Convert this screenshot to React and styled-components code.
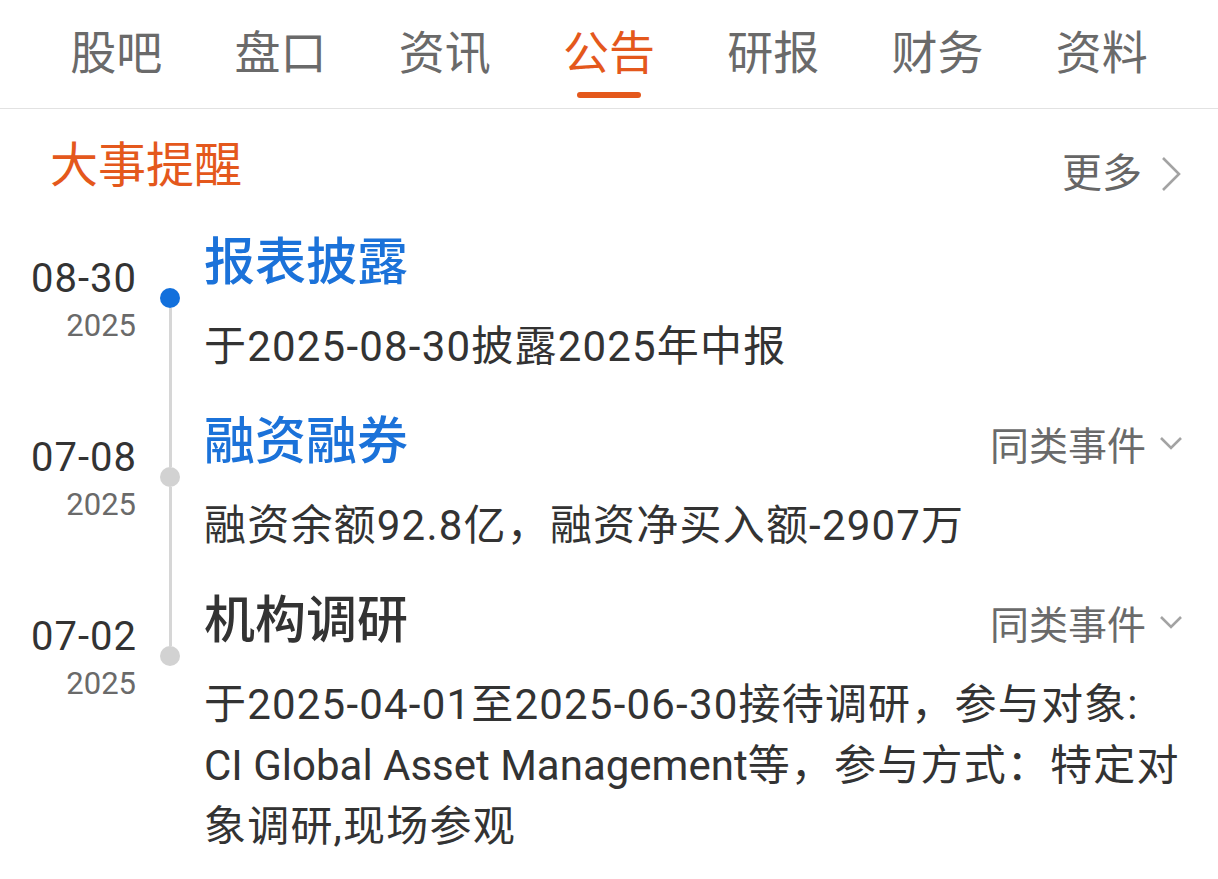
import React from "react";
import styled, { createGlobalStyle } from "styled-components";

const GlobalStyle = createGlobalStyle`
  html, body {
    margin: 0;
    padding: 0;
    background: #fff;
  }
  body {
    font-family: Roboto, "Noto Sans CJK SC", sans-serif;
    color: #333;
  }
`;

const Page = styled.div`
  width: 1218px;
  min-height: 879px;
  background: #fff;
  overflow: hidden;
`;

const TabBar = styled.nav`
  display: flex;
  height: 108px;
  padding: 0 34px;
  border-bottom: 1px solid #e2e2e2;
`;

const Tab = styled.div`
  flex: 1;
  display: flex;
  flex-direction: column;
  align-items: center;
  padding-top: 22px;
  font-size: 46px;
  line-height: 62px;
  color: ${(p) => (p.$active ? "#e4581c" : "#6a6a6a")};
`;

const TabLine = styled.span`
  width: 64px;
  height: 6px;
  margin-top: 8px;
  border-radius: 3px;
  background: ${(p) => (p.$active ? "#e4581c" : "transparent")};
`;

const SectionHead = styled.div`
  display: flex;
  align-items: flex-start;
  justify-content: space-between;
  padding: 27px 36px 0 50px;
`;

const SectionTitle = styled.h2`
  margin: 0;
  font-size: 48px;
  line-height: 60px;
  font-weight: 400;
  color: #e4581c;
`;

const More = styled.div`
  display: flex;
  align-items: center;
  gap: 18px;
  margin-top: 12px;
  font-size: 40px;
  line-height: 52px;
  color: #666;
`;

const Timeline = styled.div`
  padding: 31px 36px 0 0;
`;

const Item = styled.div`
  display: grid;
  grid-template-columns: 136px 68px 1fr;
`;

const DateCell = styled.div`
  padding-top: 23px;
  text-align: right;
`;

const DateText = styled.div`
  font-size: 40px;
  line-height: 50px;
  letter-spacing: 1px;
  margin-right: -1px;
  color: #333;
`;

const Year = styled.div`
  font-size: 31px;
  line-height: 44px;
  color: #6a6a6a;
`;

const Rail = styled.div`
  display: flex;
  flex-direction: column;
  align-items: center;
`;

const Dot = styled.span`
  flex: none;
  width: 20px;
  height: 20px;
  border-radius: 50%;
  background: ${(p) => (p.$active ? "#1270dc" : "#d2d2d2")};
`;

const RailLine = styled.span`
  flex: ${(p) => (p.$top ? "none" : "1")};
  height: ${(p) => (p.$top ? "57px" : "auto")};
  width: 3px;
  background: ${(p) => (p.$hidden ? "transparent" : "#d6d6d6")};
`;

const Content = styled.div`
  min-width: 0;
  padding-bottom: ${(p) => (p.$last ? "20px" : "33px")};
`;

const TitleRow = styled.div`
  display: flex;
  align-items: center;
  justify-content: space-between;
  margin-bottom: 21px;
`;

const Title = styled.div`
  font-size: 51px;
  line-height: 64px;
  font-weight: 500;
  color: ${(p) => (p.$blue ? "#1b72d9" : "#333")};
`;

const Similar = styled.div`
  display: flex;
  align-items: center;
  gap: 14px;
  margin-top: 2px;
  font-size: 39px;
  color: #6a6a6a;
`;

const Desc = styled.p`
  margin: 0;
  font-size: 42px;
  line-height: 61px;
  letter-spacing: 1.2px;
  color: #333;
`;

const DescLine = styled.span`
  display: block;
  white-space: nowrap;
`;

const Latin = styled.span`
  letter-spacing: 0;
`;

const ChevronRight = () => (
  <svg width="22" height="36" viewBox="0 0 22 36" fill="none">
    <polyline points="3,2 19,18 3,34" stroke="#a3a3a3" strokeWidth="2.6" />
  </svg>
);

const ChevronDown = () => (
  <svg width="22" height="14" viewBox="0 0 22 14" fill="none">
    <polyline points="1,2 11,12 21,2" stroke="#a3a3a3" strokeWidth="2.6" />
  </svg>
);

const tabs = ["股吧", "盘口", "资讯", "公告", "研报", "财务", "资料"];

const events = [
  {
    date: "08-30",
    year: "2025",
    title: "报表披露",
    blue: true,
    active: true,
    desc: ["于2025-08-30披露2025年中报"],
  },
  {
    date: "07-08",
    year: "2025",
    title: "融资融券",
    blue: true,
    similar: true,
    desc: ["融资余额92.8亿，融资净买入额-2907万"],
  },
  {
    date: "07-02",
    year: "2025",
    title: "机构调研",
    similar: true,
    desc: [
      "于2025-04-01至2025-06-30接待调研，参与对象:",
      "CI Global Asset Management等，参与方式：特定对",
      "象调研,现场参观",
    ],
  },
];

// words in latin letters are set without the extra tracking
const renderLine = (line) =>
  line.split(/([A-Za-z][A-Za-z ]*[A-Za-z])/).map((part, k) =>
    k % 2 ? <Latin key={k}>{part}</Latin> : part
  );

export default function App() {
  return (
    <Page>
      <GlobalStyle />
      <TabBar>
        {tabs.map((t) => (
          <Tab key={t} $active={t === "公告"}>
            {t}
            <TabLine $active={t === "公告"} />
          </Tab>
        ))}
      </TabBar>
      <SectionHead>
        <SectionTitle>大事提醒</SectionTitle>
        <More>
          更多
          <ChevronRight />
        </More>
      </SectionHead>
      <Timeline>
        {events.map((e, i) => (
          <Item key={e.title}>
            <DateCell>
              <DateText>{e.date}</DateText>
              <Year>{e.year}</Year>
            </DateCell>
            <Rail>
              <RailLine $top $hidden={i === 0} />
              <Dot $active={e.active} />
              <RailLine $hidden={i === events.length - 1} />
            </Rail>
            <Content $last={i === events.length - 1}>
              <TitleRow>
                <Title $blue={e.blue}>{e.title}</Title>
                {e.similar && (
                  <Similar>
                    同类事件
                    <ChevronDown />
                  </Similar>
                )}
              </TitleRow>
              <Desc>
                {e.desc.map((line, k) => (
                  <DescLine key={k}>{renderLine(line)}</DescLine>
                ))}
              </Desc>
            </Content>
          </Item>
        ))}
      </Timeline>
    </Page>
  );
}
